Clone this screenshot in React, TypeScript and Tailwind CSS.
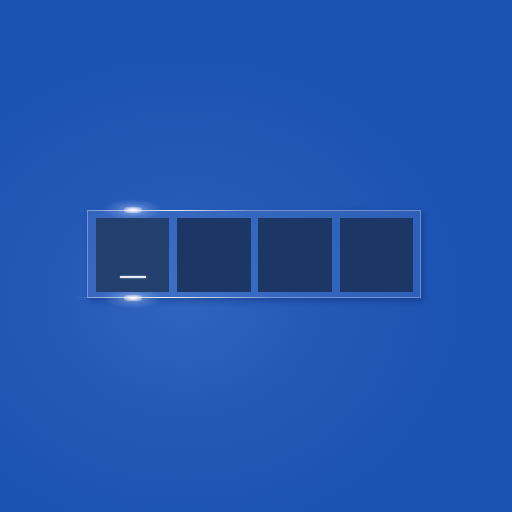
import React from "react";

function Glow({ pos }: { pos: "top" | "bottom" }) {
  const wrap =
    pos === "top"
      ? "absolute top-[-12px] left-[15px] w-[60px] h-[22px] pointer-events-none"
      : "absolute bottom-[-12px] left-[15px] w-[60px] h-[22px] pointer-events-none";
  return (
    <div className={wrap}>
      <div className="absolute inset-0 rounded-full bg-[radial-gradient(ellipse_at_center,rgba(210,225,255,0.55)_0%,rgba(170,200,255,0.2)_40%,rgba(255,255,255,0)_70%)]" />
      <div className="absolute left-[21px] top-[8px] w-[18px] h-[6px] rounded-full bg-[radial-gradient(ellipse_at_center,rgba(255,255,255,1)_0%,rgba(255,255,255,0.6)_45%,rgba(255,255,255,0)_100%)]" />
    </div>
  );
}

export default function App() {
  const boxes = [0, 1, 2, 3];
  return (
    <div className="w-[512px] h-[512px] overflow-hidden flex items-center justify-center pr-[4px] pb-[4px] bg-[radial-gradient(ellipse_75%_65%_at_36%_58%,#2f65c0_0%,#2559b8_35%,#1c52b2_75%)]">
      <div className="relative flex gap-[7.7px] pl-[8px] pr-[7px] pt-[7px] pb-[5px] border border-white/30 bg-white/[0.07] shadow-[2px_3px_6px_rgba(10,30,90,0.35)]">
        <div className="absolute -top-px left-[-6px] w-[170px] h-px bg-[linear-gradient(90deg,rgba(255,255,255,0)_0%,rgba(255,255,255,0.5)_30%,rgba(255,255,255,0.8)_55%,rgba(255,255,255,0)_100%)]" />
        <div className="absolute -bottom-px left-[-14px] w-[200px] h-px bg-[linear-gradient(90deg,rgba(255,255,255,0)_0%,rgba(255,255,255,0.5)_25%,rgba(255,255,255,0.9)_45%,rgba(255,255,255,0)_100%)]" />
        <Glow pos="top" />
        <Glow pos="bottom" />
        {boxes.map((i) => (
          <div
            key={i}
            className={
              i === 0
                ? "relative w-[73.5px] h-[74px] bg-[#223f6e] flex flex-col items-center justify-end pb-[14px]"
                : "w-[73.5px] h-[74px] bg-[#1c3766]"
            }
          >
            {i === 0 && (
              <div className="w-[26px] h-[2px] bg-white/90 shadow-[0_0_2px_rgba(255,255,255,0.6)]" />
            )}
          </div>
        ))}
      </div>
    </div>
  );
}
